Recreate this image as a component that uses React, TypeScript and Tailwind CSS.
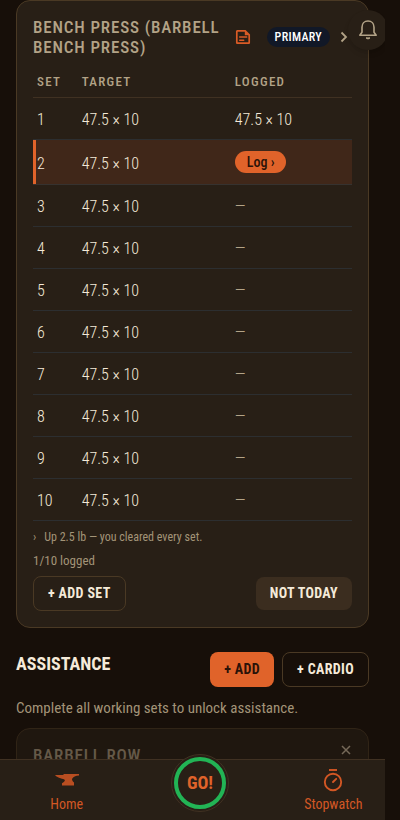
import type { ReactNode } from "react";

type SetRow = {
  set: number;
  target: string;
  logged: string | null;
};

const CURRENT_SET = 2;

const sets: SetRow[] = Array.from({ length: 10 }, (_, i) => ({
  set: i + 1,
  target: "47.5 × 10",
  logged: i === 0 ? "47.5 × 10" : null,
}));

function NoteIcon() {
  return (
    <svg width="16" height="16" viewBox="0 0 16 16" fill="none" stroke="currentColor" strokeWidth="1.7">
      <path d="M10.2 1.9H2.2a.4.4 0 0 0-.4.4v11.500a.4.4 0 0 0 .4.4h11.600a.4.4 0 0 0 .4-.4V5.900z" />
      <path d="M9.800 1.500v4.800h4.800z" fill="currentColor" stroke="none" />
      <path d="M4.700 8.100h7M4.700 11.200h4" strokeLinecap="round" strokeWidth="1.500" />
    </svg>
  );
}

function BellIcon() {
  return (
    <svg
      width="20"
      height="22"
      viewBox="0 0 20 22"
      fill="none"
      stroke="currentColor"
      strokeWidth="1.6"
      strokeLinejoin="round"
    >
      <path d="M1.800 16.200h16.400l-2.200-3V8.200C16 4.600 13.600 2 10 2S4 4.600 4 8.200v5z" />
      <path d="M8 18.900h4q-2 2.200-4 0z" fill="currentColor" strokeWidth="1" />
    </svg>
  );
}

function AnvilIcon() {
  return (
    <svg width="24" height="24" viewBox="0 0 24 24" fill="currentColor" className="opacity-85">
      <path d="M8.500 6H24v1.600c-3.400.2-5.800 1.200-7 3.400.1 1.500.8 2.600 2 3.400V17.600H7v-2.400c1.700-.8 2.800-1.700 2.900-3.200C8.600 10.600 2.800 10.500 0 7h8.500z" />
    </svg>
  );
}

function StopwatchIcon() {
  return (
    <svg width="24" height="24" viewBox="0 0 24 24" fill="none" stroke="currentColor" strokeWidth="1.900">
      <path d="M8 2h8" />
      <circle cx="12" cy="14" r="8.200" />
      <path d="M12 14l3.200-3.200" strokeLinecap="round" />
    </svg>
  );
}

function CardTitle({ children }: { children: ReactNode }) {
  return (
    <h2 className="text-[17px] leading-5 font-medium tracking-wider text-[#b3a387] uppercase">{children}</h2>
  );
}

function SetTable() {
  return (
    <table className="mt-2 w-full table-fixed border-collapse text-left">
      <thead>
        <tr className="h-8 border-b border-[#403122] text-[13px] tracking-widest text-[#b3a387]">
          <th scope="col" className="w-[14%] pt-0.5 pl-1 font-medium">SET</th>
          <th scope="col" className="w-[48%] pt-0.5 pl-1 font-medium">TARGET</th>
          <th scope="col" className="pt-0.5 pl-1 font-medium">LOGGED</th>
        </tr>
      </thead>
      <tbody>
        {sets.map((row) => {
          const current = row.set === CURRENT_SET;
          return (
            <tr
              key={row.set}
              className={
                current
                  ? "h-[45px] border-b border-[#36322f] bg-[#402719] shadow-[inset_3px_0_0_#e0632a]"
                  : "h-[42px] border-b border-[#2c2e30]"
              }
            >
              <td className="pt-1 pl-1 font-light">{row.set}</td>
              <td className="pt-1 pl-1 font-light">{row.target}</td>
              {current ? (
                <td className="pl-1">
                  <button
                    type="button"
                    className="block rounded-full bg-[#e0632a] px-3 text-sm leading-[22px] font-medium text-[#2a1208]"
                  >
                    Log ›
                  </button>
                </td>
              ) : (
                <td className="pt-1 pl-1 font-light">
                  {row.logged ?? <span className="text-[#b3a387]">—</span>}
                </td>
              )}
            </tr>
          );
        })}
      </tbody>
    </table>
  );
}

function ExerciseCard() {
  return (
    <section className="rounded-[14px] border border-[#4a3924] bg-[#281f16] p-4">
      <header className="flex items-center">
        <div className="flex-1">
          <CardTitle>Bench Press (Barbell Bench Press)</CardTitle>
        </div>
        <button type="button" aria-label="Notes" className="text-[#d95b26]">
          <NoteIcon />
        </button>
        <span className="ml-4 rounded-full bg-[#111827] px-2 text-xs leading-5 font-medium tracking-wide text-white">
          PRIMARY
        </span>
        <button type="button" aria-label="Open exercise" className="mr-1 ml-2.5 text-[#b3a387]">
          <svg width="8" height="12" viewBox="0 0 8 12" fill="none" stroke="currentColor" strokeWidth="1.800">
            <path d="M1.500 1.500L6 6l-4.500 4.500" />
          </svg>
        </button>
      </header>
      <SetTable />
      <p className="mt-2 flex gap-2 text-xs leading-4 text-[#a39478]">
        <span>›</span>Up 2.5 lb — you cleared every set.
      </p>
      <p className="mt-2 text-[13px] leading-4 text-[#a39478]">1/10 logged</p>
      <div className="mt-[7px] flex items-center justify-between">
        <button
          type="button"
          className="h-[35px] rounded-lg border border-[#4a3924] px-3.5 text-sm font-bold tracking-wide"
        >
          + ADD SET
        </button>
        <button type="button" className="h-[33px] rounded-lg bg-[#3b2d1f] px-3.5 text-sm font-bold tracking-wide">
          NOT TODAY
        </button>
      </div>
    </section>
  );
}

function Assistance() {
  return (
    <section className="mt-6">
      <div className="flex items-start gap-2">
        <h2 className="flex-1 text-lg leading-6 font-bold">ASSISTANCE</h2>
        <button
          type="button"
          className="h-[35px] rounded-lg bg-[#e0632a] px-3.5 text-sm font-bold tracking-wide text-[#2a1208]"
        >
          + ADD
        </button>
        <button
          type="button"
          className="h-[35px] rounded-lg border border-[#4a3924] px-3.5 text-sm font-bold tracking-wide"
        >
          + CARDIO
        </button>
      </div>
      <p className="mt-[11px] text-[15px] leading-5 text-[#a39478]">
        Complete all working sets to unlock assistance.
      </p>
      <article className="mt-2.5 flex justify-between rounded-[14px] border border-[#4a3924] bg-[#281f16] p-4 pb-20 opacity-50">
        <CardTitle>Barbell Row</CardTitle>
        <button type="button" aria-label="Remove Barbell Row" className="h-2 pr-px text-[#d3c3a7]">
          <svg width="10" height="10" viewBox="0 0 10 10" stroke="currentColor" strokeWidth="1.500">
            <path d="M1 1l8 8M9 1L1 9" />
          </svg>
        </button>
      </article>
    </section>
  );
}

function BottomNav() {
  return (
    <nav className="grid h-[61px] shrink-0 grid-cols-3 border-t border-[#403122] bg-[#281f16] text-sm leading-4 text-[#d35724]">
      <a href="#home" className="flex flex-col items-center gap-1 pt-2">
        <AnvilIcon />
        Home
      </a>
      <div className="relative flex justify-center">
        <button
          type="button"
          className="absolute -top-1.5 flex size-[58px] items-center justify-center rounded-full border border-[#403122] bg-[#281f16]"
        >
          <span className="flex size-[52px] shrink-0 items-center justify-center rounded-full border-4 border-[#22b455] text-lg font-bold text-[#e0632a]">
            GO!
          </span>
        </button>
      </div>
      <a href="#stopwatch" className="flex flex-col items-center gap-1 pt-2">
        <StopwatchIcon />
        Stopwatch
      </a>
    </nav>
  );
}

export default function App() {
  return (
    <div className="relative flex h-screen flex-col overflow-hidden bg-[#170f09] font-['Roboto_Condensed','Liberation_Sans_Narrow',Roboto,sans-serif] text-[#f5ead9]">
      <main className="min-h-0 flex-1 overflow-hidden pr-[31px] pl-4">
        <ExerciseCard />
        <Assistance />
      </main>
      <BottomNav />
      <button
        type="button"
        aria-label="Notifications"
        className="absolute top-2.5 right-3 flex size-10 items-center justify-center rounded-full bg-[#281f16] text-[#b3a387] shadow-md"
      >
        <BellIcon />
      </button>
      <div className="absolute inset-y-0 right-0 w-[15px] bg-[#170f09]" />
    </div>
  );
}
